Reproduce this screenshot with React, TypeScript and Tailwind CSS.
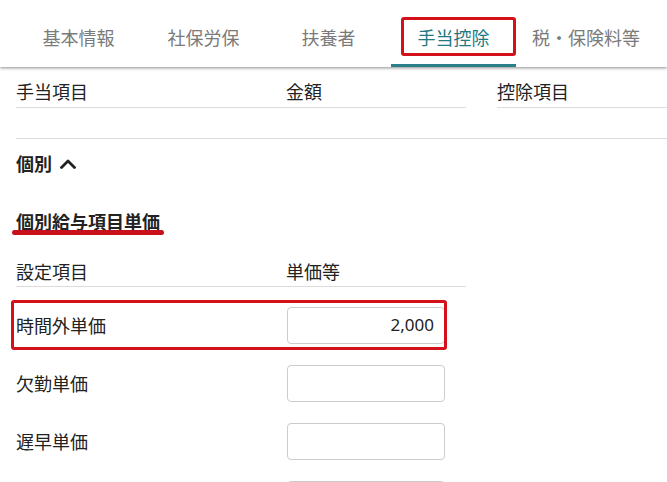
const TABS = ["基本情報", "社保労保", "扶養者", "手当控除", "税・保険料等"] as const;
const ACTIVE_TAB = "手当控除";

const UNIT_ROWS = [
  { label: "時間外単価", value: "2,000", marked: true },
  { label: "欠勤単価", value: "", marked: false },
  { label: "遅早単価", value: "", marked: false },
  { label: "", value: "", marked: false },
];

const font = "font-['Noto_Sans_CJK_JP','Noto_Sans',sans-serif]";

function TabBar() {
  return (
    <div className="relative z-10 flex h-[67px] bg-white pl-4 shadow-[0_1px_3px_rgba(0,0,0,0.45)]">
      {TABS.map((tab) => {
        const isActive = tab === ACTIVE_TAB;
        return (
          <div
            key={tab}
            className={`relative flex min-w-[125px] shrink-0 items-center justify-center whitespace-nowrap border-b-[3px] px-4 pt-[10px] text-[18px] leading-[24px] ${
              isActive
                ? "border-[#2b7f88] text-[#1f7a82]"
                : "border-transparent text-[#7a7a7a]"
            }`}
          >
            {tab}
            {isActive && (
              <span className="absolute left-[10px] top-[17px] h-[39px] w-[115px] rounded-[3px] border-[3px] border-[#d4101a]" />
            )}
          </div>
        );
      })}
    </div>
  );
}

export default function App() {
  return (
    <div className={`h-[482px] w-[667px] overflow-hidden bg-white text-[#222] ${font}`}>
      <TabBar />

      <div className="pl-4">
        {/* 手当 / 控除 header tables */}
        <div className="flex gap-[31px] text-[18px] leading-[24px]">
          <div className="flex w-[450px] shrink-0 border-b border-[#dcdcdc] pt-3 pb-1">
            <span className="w-[270px]">手当項目</span>
            <span>金額</span>
          </div>
          <div className="flex flex-1 border-b border-[#dcdcdc] pt-3 pb-1">
            <span>控除項目</span>
          </div>
        </div>
        <div className="h-[31px] border-b border-[#dcdcdc]" />

        {/* 個別 section */}
        <div className="mt-3 flex items-center gap-[8px] text-[18px] font-bold leading-[24px]">
          個別
          <svg width="16" height="10" viewBox="0 0 16 10" fill="none" className="mt-[1px]">
            <polyline
              points="1.5,8.5 8,2 14.5,8.5"
              stroke="#222"
              strokeWidth="2.8"
              strokeLinecap="round"
              strokeLinejoin="round"
            />
          </svg>
        </div>

        <div className="relative mt-[34px] w-fit text-[18px] font-bold leading-[24px]">
          個別給与項目単価
          <span className="absolute left-[-4px] right-[-4px] top-[21px] h-[5px] rounded-full bg-[#c8111b]" />
        </div>

        <div className="mt-[26px] w-[450px]">
          <div className="flex border-b border-[#dcdcdc] pb-[3px] text-[18px] leading-[24px]">
            <span className="w-[270px]">設定項目</span>
            <span>単価等</span>
          </div>

          <div className="mt-[9px]">
            {UNIT_ROWS.map((row, i) => (
              <div key={i} className="relative flex h-[58px] items-center text-[18px]">
                <span className="w-[271px] leading-[24px]">{row.label}</span>
                <div className="flex h-[37px] w-[158px] items-center justify-end rounded-[4px] border border-[#cccccc] pr-[10px] font-['Noto_Sans',sans-serif] text-[17px] text-[#222]">
                  {row.value}
                </div>
                {row.marked && (
                  <span className="absolute left-[-5px] top-[4px] h-[50px] w-[436px] rounded-[3px] border-[3px] border-[#d4101a]" />
                )}
              </div>
            ))}
          </div>
        </div>
      </div>
    </div>
  );
}
